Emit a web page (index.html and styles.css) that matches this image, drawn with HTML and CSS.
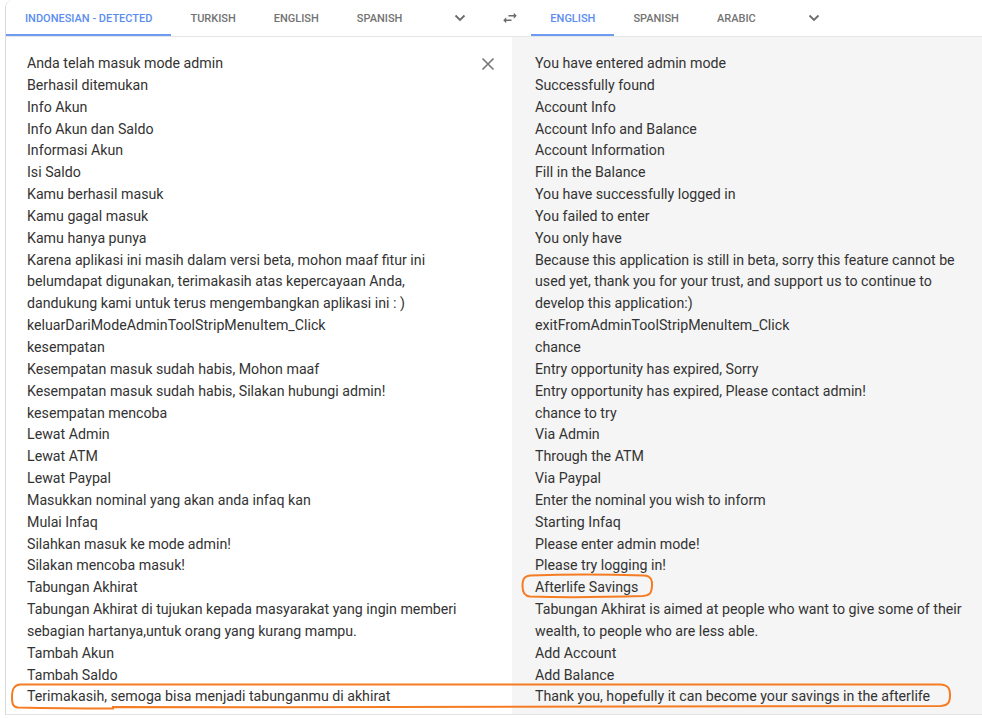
FILE: index.html
```html
<!DOCTYPE html>
<html lang="en">
<head>
    <meta charset="UTF-8">
    <meta name="viewport" content="width=device-width, initial-scale=1.0">
    <title>Translate - Documents</title>
    <link rel="stylesheet" href="styles.css">
</head>
<body>
    <div class="card">
        <!-- Language bar -->
        <div class="lang-bar">
            <div class="lang-tab active">Indonesian - detected</div>
            <div class="lang-tab">Turkish</div>
            <div class="lang-tab">English</div>
            <div class="lang-tab">Spanish</div>
            <div class="lang-more">
                <svg width="12" height="8" viewBox="0 0 12 8"><path d="M1.5 1.5L6 6l4.5-4.5" fill="none" stroke="#6b6b6b" stroke-width="1.8"/></svg>
            </div>
            <div class="lang-swap">
                <svg width="18" height="18" viewBox="0 0 24 24"><path d="M6.99 11L3 15l3.99 4v-3H14v-2H6.99v-3zM21 9l-3.99-4v3H10v2h7.01v3L21 9z" fill="#6b6b6b"/></svg>
            </div>
            <div class="lang-tab active">English</div>
            <div class="lang-tab">Spanish</div>
            <div class="lang-tab">Arabic</div>
            <div class="lang-more">
                <svg width="12" height="8" viewBox="0 0 12 8"><path d="M1.5 1.5L6 6l4.5-4.5" fill="none" stroke="#6b6b6b" stroke-width="1.8"/></svg>
            </div>
        </div>

        <div class="panes">
            <!-- Source text -->
            <div class="pane source">
                <button class="clear-btn" title="Clear source text">
                    <svg width="14" height="14" viewBox="0 0 14 14"><path d="M1.5 1.5l11 11M12.5 1.5l-11 11" stroke="#757575" stroke-width="1.6"/></svg>
                </button>
                <div class="line">Anda telah masuk mode admin</div>
                <div class="line">Berhasil ditemukan</div>
                <div class="line">Info Akun</div>
                <div class="line">Info Akun dan Saldo</div>
                <div class="line">Informasi Akun</div>
                <div class="line">Isi Saldo</div>
                <div class="line">Kamu berhasil masuk</div>
                <div class="line">Kamu gagal masuk</div>
                <div class="line">Kamu hanya punya</div>
                <div class="line">Karena aplikasi ini masih dalam versi beta, mohon maaf fitur ini belumdapat digunakan, terimakasih atas kepercayaan Anda, dandukung kami untuk terus mengembangkan aplikasi ini : )</div>
                <div class="line">keluarDariModeAdminToolStripMenuItem_Click</div>
                <div class="line">kesempatan</div>
                <div class="line">Kesempatan masuk sudah habis, Mohon maaf</div>
                <div class="line">Kesempatan masuk sudah habis, Silakan hubungi admin!</div>
                <div class="line">kesempatan mencoba</div>
                <div class="line">Lewat Admin</div>
                <div class="line">Lewat ATM</div>
                <div class="line">Lewat Paypal</div>
                <div class="line">Masukkan nominal yang akan anda infaq kan</div>
                <div class="line">Mulai Infaq</div>
                <div class="line">Silahkan masuk ke mode admin!</div>
                <div class="line">Silakan mencoba masuk!</div>
                <div class="line">Tabungan Akhirat</div>
                <div class="line">Tabungan Akhirat di tujukan kepada masyarakat yang ingin memberi sebagian hartanya,untuk orang yang kurang mampu.</div>
                <div class="line">Tambah Akun</div>
                <div class="line">Tambah Saldo</div>
                <div class="line">Terimakasih, semoga bisa menjadi tabunganmu di akhirat</div>
            </div>

            <!-- Translated text -->
            <div class="pane target">
                <div class="line">You have entered admin mode</div>
                <div class="line">Successfully found</div>
                <div class="line">Account Info</div>
                <div class="line">Account Info and Balance</div>
                <div class="line">Account Information</div>
                <div class="line">Fill in the Balance</div>
                <div class="line">You have successfully logged in</div>
                <div class="line">You failed to enter</div>
                <div class="line">You only have</div>
                <div class="line">Because this application is still in beta, sorry this feature cannot be used yet, thank you for your trust, and support us to continue to develop this application:)</div>
                <div class="line">exitFromAdminToolStripMenuItem_Click</div>
                <div class="line">chance</div>
                <div class="line">Entry opportunity has expired, Sorry</div>
                <div class="line">Entry opportunity has expired, Please contact admin!</div>
                <div class="line">chance to try</div>
                <div class="line">Via Admin</div>
                <div class="line">Through the ATM</div>
                <div class="line">Via Paypal</div>
                <div class="line">Enter the nominal you wish to inform</div>
                <div class="line">Starting Infaq</div>
                <div class="line">Please enter admin mode!</div>
                <div class="line">Please try logging in!</div>
                <div class="line">Afterlife Savings</div>
                <div class="line">Tabungan Akhirat is aimed at people who want to give some of their wealth, to people who are less able.</div>
                <div class="line">Add Account</div>
                <div class="line">Add Balance</div>
                <div class="line">Thank you, hopefully it can become your savings in the afterlife</div>
            </div>
        </div>
    </div>

    <!-- Hand-drawn highlight marks -->
    <svg class="marks" width="982" height="718" viewBox="0 0 982 718">
        <path d="M531 575.5 C560 574.5 610 574.5 644 575.5 C651 576 652.5 580 652 586 C651.5 593 650 595.5 643 596 C610 597 560 597.5 530 596.5 C524 596 522.5 592 522.5 586 C522.5 579 524 576 531 575.5 Z"
              fill="none" stroke="#f57c22" stroke-width="2"/>
        <path d="M20 684.5 C200 684 500 683.5 940 684.5 C948 685 950 688 950 695 C950 702 948.5 705.5 941 706 C700 707 400 707.5 113 707 L113 708.5 C80 708.5 40 708 18 707.5 C13 707 12 704 12 697 C12 689 14 685 20 684.5 Z"
              fill="none" stroke="#f57c22" stroke-width="2"/>
    </svg>
</body>
</html>
```

FILE: styles.css
```css
/* Page styling */
body {
    margin: 0;
    background: #fff;
    font-family: Roboto, "Noto Sans", Arial, sans-serif;
    color: #333;
}

/* Translation card */
.card {
    margin-left: 5px;
    border-left: 1px solid #d9d9d9;
    border-bottom: 1px solid #e3e3e3;
    border-top-left-radius: 8px;
    overflow: hidden;
}

/* Language tabs */
.lang-bar {
    display: flex;
    align-items: stretch;
    height: 36px;
    border-bottom: 1px solid #e6e6e6;
    background: #fff;
}

.lang-tab {
    display: flex;
    align-items: center;
    padding: 2px 19px 0;
    border-bottom: 2px solid transparent;
    font-size: 11px;
    font-weight: 500;
    text-transform: uppercase;
    color: #737373;
    white-space: nowrap;
}

.lang-tab.active {
    color: #5b8def;
    border-bottom-color: #6d9bf1;
}

.lang-more {
    width: 78px;
    display: flex;
    align-items: center;
    justify-content: center;
}

.lang-swap {
    width: 22px;
    margin-right: 10px;
    display: flex;
    align-items: center;
    justify-content: center;
}

/* Text panes */
.panes {
    display: grid;
    grid-template-columns: 506px 1fr;
}

.pane {
    padding: 16px 0 6px;
    font-size: 14.2px;
    line-height: 21.85px;
}

.source {
    position: relative;
    background: #fff;
    padding-left: 21px;
    padding-right: 46px;
}

.target {
    background: #f5f5f5;
    padding-left: 23px;
    padding-right: 4px;
}

.clear-btn {
    position: absolute;
    top: 19px;
    right: 16px;
    width: 16px;
    height: 16px;
    padding: 0;
    border: none;
    background: none;
    display: flex;
    align-items: center;
    justify-content: center;
    cursor: pointer;
}

/* Annotation layer */
.marks {
    position: absolute;
    left: 0;
    top: 0;
    pointer-events: none;
}
```
